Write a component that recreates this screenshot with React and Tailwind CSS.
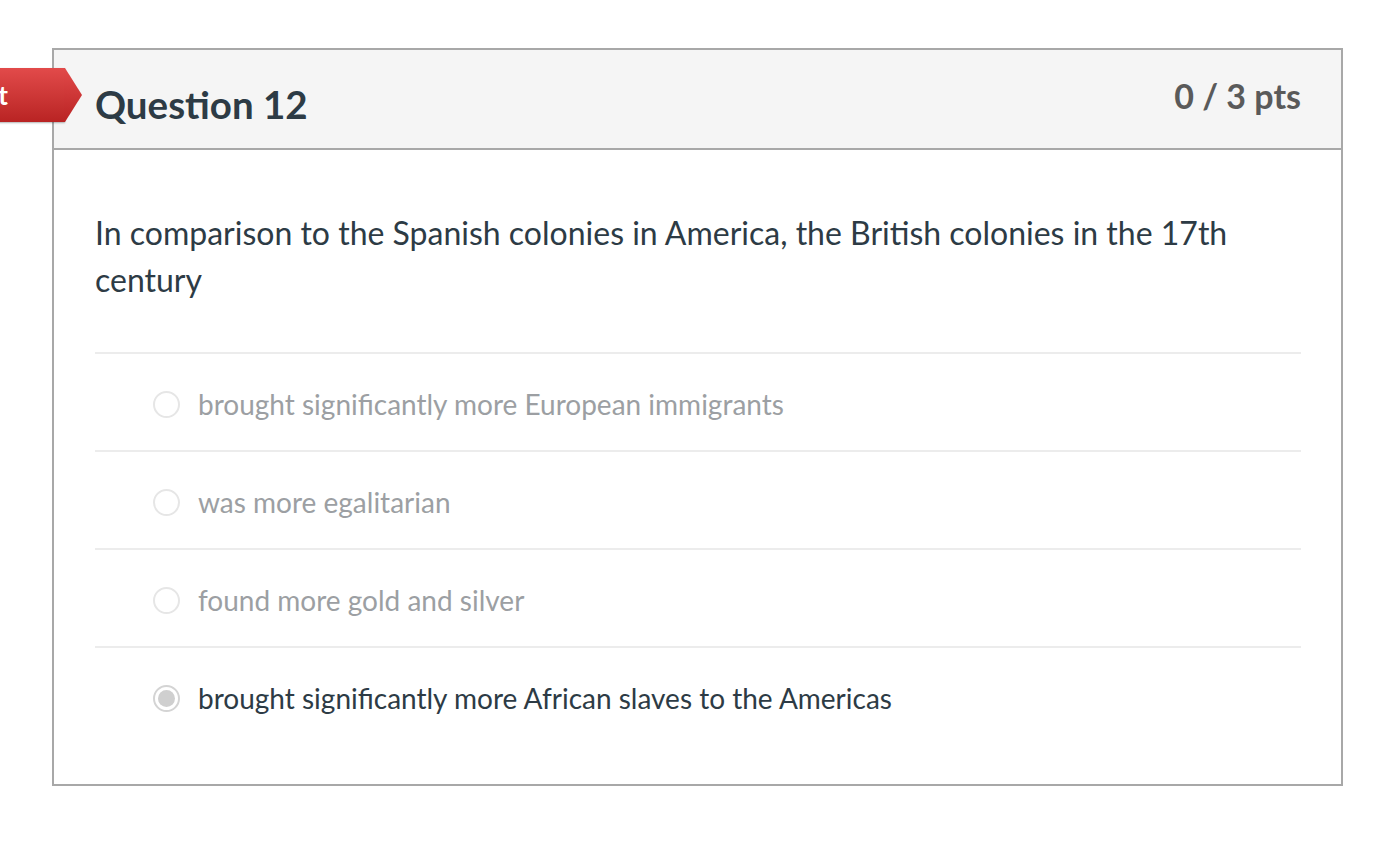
const answers = [
  { text: "brought significantly more European immigrants", selected: false },
  { text: "was more egalitarian", selected: false },
  { text: "found more gold and silver", selected: false },
  { text: "brought significantly more African slaves to the Americas", selected: true },
];

function Radio({ selected }) {
  if (selected) {
    return (
      <span className="flex h-[27px] w-[27px] shrink-0 items-center justify-center rounded-full border-2 border-[#d4d4d4] bg-white">
        <span className="h-[17px] w-[17px] rounded-full bg-[#cfcfcf]" />
      </span>
    );
  }
  return <span className="h-[27px] w-[27px] shrink-0 rounded-full border-2 border-[#e6e6e6] bg-white" />;
}

export default function App() {
  return (
    <div className="min-h-[842px] bg-white pt-[48px] font-['Lato','Open_Sans',sans-serif]">
      <div className="relative ml-[52px] w-[1291px] border-2 border-[#a8a8a8]">
        {/* incorrect tag sticking out on the left */}
        <div className="absolute left-[-100px] top-[18px] flex h-[54px] items-center">
          <div className="flex h-[54px] w-[111px] items-center justify-end rounded-l-sm bg-gradient-to-b from-[#e24a4a] to-[#b92323] pr-[57px] text-[26px] font-bold text-white shadow-[0_1px_2px_rgba(0,0,0,0.3)]">
            Incorrect
          </div>
          <svg width="18" height="54" viewBox="0 0 18 54" className="-ml-px">
            <defs>
              <linearGradient id="tagg" x1="0" y1="0" x2="0" y2="1">
                <stop offset="0" stopColor="#e24a4a" />
                <stop offset="1" stopColor="#b92323" />
              </linearGradient>
            </defs>
            <polygon points="0,0 1,0 18,27 1,54 0,54" fill="url(#tagg)" />
          </svg>
        </div>

        <div className="flex h-[100px] items-start justify-between border-b-2 border-[#a8a8a8] bg-[#f5f5f5] pl-[41px] pr-[40px]">
          <h2 className="mt-[28px] text-[38.5px] font-bold leading-[52px] text-[#2d3b45]">Question 12</h2>
          <div className="mt-[25px] text-[34px] font-bold leading-[42px] text-[#5a5a5a]">0 / 3 pts</div>
        </div>

        <div className="px-[40px] pb-[40px] pl-[41px] pt-[59px]">
          <p className="text-[32px] leading-[47px] text-[#2d3b45]">
            In comparison to the Spanish colonies in America, the British colonies in the 17th century
          </p>
          <div className="mt-[49px]">
            {answers.map((a) => (
              <div
                key={a.text}
                className="flex h-[98px] items-center border-t-2 border-[#ececec] pl-[58px] pt-[4px]"
              >
                <Radio selected={a.selected} />
                <span
                  className={
                    a.selected
                      ? "ml-[18px] text-[28px] text-[#2d3b45]"
                      : "ml-[18px] text-[28px] text-[#9c9fa3]"
                  }
                >
                  {a.text}
                </span>
              </div>
            ))}
          </div>
        </div>
      </div>
    </div>
  );
}
